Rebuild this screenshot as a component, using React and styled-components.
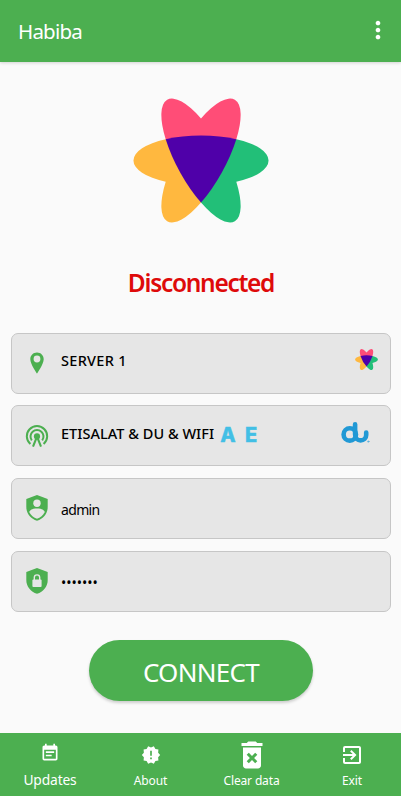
import styled, { createGlobalStyle } from "styled-components";
import {
  MdDeleteForever,
  MdEventNote,
  MdExitToApp,
  MdMoreVert,
  MdNewReleases,
} from "react-icons/md";

const GREEN = "#4caf50";

const GlobalStyle = createGlobalStyle`
  * {
    box-sizing: border-box;
  }
  body {
    margin: 0;
    background: #fafafa;
    font-family: "Noto Sans", "Open Sans", sans-serif;
  }
`;

// three crossed ellipses, centered on 0,0
const StarLogo = ({ width, height }) => (
  <svg width={width} height={height} viewBox="-68 -62.5 136 125" preserveAspectRatio="none">
    <path fill="#ffb83f" d="M-35.3 -21.3A67.7 25 0 0 0 -35.3 21.3A69.5 24 -61.1 0 0 0 42.1L10 0Z" />
    <path fill="#22bf78" d="M35.3 -21.3A67.7 25 0 0 1 35.3 21.3A69.5 24 61.1 0 1 0 42.1L-10 0Z" />
    <path fill="#ff4d77" d="M-35.3 -21.3A69.5 24 61.1 0 1 0 -42.1A69.5 24 -61.1 0 1 35.3 -21.3L0 0Z" />
    <path fill="#4f00a9" d="M-35.3 -21.3A67.7 25 0 0 1 35.3 -21.3A69.5 24 -61.1 0 1 0 42.1A69.5 24 61.1 0 1 -35.3 -21.3Z" />
  </svg>
);

const DuLogo = () => (
  <svg width="30" height="24" viewBox="0 0 30 24" fill="none" stroke="#2199d5" strokeWidth="4.6" strokeLinecap="round">
    <circle cx="8.8" cy="13.4" r="6.2" />
    <path d="M14.1 3.2V13.4C14.1 17.5 16.6 19.4 19.6 19.4C22.8 19.4 25.2 17.3 25.2 14V11.6" />
    <circle cx="27.3" cy="20.6" r="0.7" strokeWidth="0.5" />
  </svg>
);

const PinIcon = () => (
  <svg width="14" height="22" viewBox="0 0 14 22">
    <path
      fill={GREEN}
      fillRule="evenodd"
      d="M7 0.5C3.2 0.5 0.3 3.4 0.3 7.2C0.3 12 7 21.5 7 21.5S13.7 12 13.7 7.2C13.7 3.4 10.8 0.5 7 0.5ZM7 3.6A3.4 3.4 0 1 1 7 10.4A3.4 3.4 0 1 1 7 3.6Z"
    />
  </svg>
);

const AntennaIcon = () => (
  <svg width="24" height="24" viewBox="0 0 24 24" fill="none" stroke={GREEN} strokeWidth="2">
    <path d="M5.4 20A10.2 10.2 0 1 1 18.6 20" />
    <path d="M6.8 16.4A6.5 6.5 0 1 1 17.2 16.4" />
    <path d="M8 22.6L12 12.5L16 22.6" strokeWidth="2.1" />
    <circle cx="12" cy="12.4" r="3.1" fill={GREEN} stroke="none" />
  </svg>
);

const ShieldIcon = ({ children }) => (
  <svg width="24" height="28" viewBox="0 0 24 28">
    <path fill={GREEN} d="M12 1L22.7 5V13C22.7 19.5 18.4 24.8 12 26.8C5.6 24.8 1.3 19.5 1.3 13V5Z" />
    {children}
  </svg>
);

const App = () => {
  return (
    <>
      <GlobalStyle />
      <Screen>
        <Header>
          <Title>Habiba</Title>
          <MdMoreVert size={28} />
        </Header>

        <Main>
          <Hero>
            <StarLogo width={136} height={125} />
          </Hero>
          <Status>Disconnected</Status>

          <Fields>
            <Field>
              <IconSlot><PinIcon /></IconSlot>
              <Label $bold $spacing="0.3px">SERVER 1</Label>
              <Brand $width="23px" $lift="-8px"><StarLogo width={23} height={21} /></Brand>
            </Field>
            <Field>
              <IconSlot><AntennaIcon /></IconSlot>
              <Label $bold $spacing="0.03px">ETISALAT &amp; DU &amp; WIFI</Label>
              <Letters>
                <span>A</span>
                <span>E</span>
              </Letters>
              <Brand $width="37px" $lift="-6px"><DuLogo /></Brand>
            </Field>
            <Field>
              <IconSlot>
                <ShieldIcon>
                  <circle cx="12" cy="9.2" r="3.7" fill="#e6e6e6" />
                  <path fill="#e6e6e6" d="M4.2 18C5 15.5 8.5 14.5 12 14.5S19 15.5 19.8 18C18.2 21.2 15.3 23.6 12 24.8C8.7 23.6 5.8 21.2 4.2 18Z" />
                </ShieldIcon>
              </IconSlot>
              <Label $drop="2px" $size="14px" $spacing="-0.65px">admin</Label>
            </Field>
            <Field>
              <IconSlot>
                <ShieldIcon>
                  <rect x="7.4" y="12.4" width="9.2" height="7.6" rx="1" fill="#e6e6e6" />
                  <path d="M9.3 13V10.6A2.7 2.7 0 0 1 14.7 10.6V13" fill="none" stroke="#e6e6e6" strokeWidth="1.4" />
                </ShieldIcon>
              </IconSlot>
              <Password>•••••••</Password>
            </Field>
          </Fields>

          <ConnectButton>CONNECT</ConnectButton>
        </Main>

        <Footer>
          <NavItem $size="13.8px" $iconTop="1px">
            <MdEventNote size={20} />
            <span>Updates</span>
          </NavItem>
          <NavItem>
            <MdNewReleases size={20} />
            <span>About</span>
          </NavItem>
          <NavItem>
            <MdDeleteForever size={36} />
            <span>Clear data</span>
          </NavItem>
          <NavItem>
            <MdExitToApp size={24} />
            <span>Exit</span>
          </NavItem>
        </Footer>
      </Screen>
    </>
  );
};

export default App;

const Screen = styled.div`
  width: 401px;
  height: 800px;
  display: flex;
  flex-direction: column;
  background: #fafafa;
  border-bottom: 4px solid #fff;
`;
const Header = styled.header`
  height: 61.5px;
  flex: none;
  display: flex;
  align-items: center;
  justify-content: space-between;
  padding: 0 9px 2px 18px;
  background: ${GREEN};
  color: white;
  box-shadow: 0 1px 3px rgba(0, 0, 0, 0.16);
`;
const Title = styled.h1`
  margin: 3px 0 0;
  font-size: 20.5px;
  font-weight: 400;
  line-height: 28px;
  letter-spacing: -0.8px;
`;
const Main = styled.main`
  flex: 1;
  display: flex;
  flex-direction: column;
  align-items: center;
  padding-top: 36.5px;
`;
const Hero = styled.div`
  display: flex;
  padding-left: 1.5px;
`;
const Status = styled.div`
  height: 36px;
  margin: 41px 0 0 1px;
  line-height: 37px;
  font-size: 24.5px;
  font-weight: 600;
  letter-spacing: -1.3px;
  color: #de0a0a;
`;
const Fields = styled.section`
  width: 380px;
  margin: 32.5px 0 0 1px;
  display: grid;
  gap: 11.7px;
`;
const Field = styled.div`
  height: 61px;
  display: flex;
  align-items: center;
  padding-right: 12px;
  border: 1.5px solid #c6c6c6;
  border-radius: 7px;
  background: #e6e6e6;
`;
const IconSlot = styled.div`
  width: 49px;
  display: flex;
  justify-content: center;
`;
const Label = styled.span`
  margin-top: ${({ $drop }) => $drop || "-6px"};
  font-size: ${({ $size }) => $size || "14.5px"};
  font-weight: ${({ $bold }) => ($bold ? 500 : 400)};
  letter-spacing: ${({ $spacing }) => $spacing || "0"};
  white-space: nowrap;
  color: #000;
`;
const Letters = styled.span`
  display: flex;
  gap: 9.5px;
  margin: -2px 0 0 6px;
  font-family: Inter, sans-serif;
  font-size: 20px;
  font-weight: 800;
  line-height: 24px;
  color: #42bfe5;
  -webkit-text-stroke: 0.4px #42bfe5;
`;
const Brand = styled.div`
  display: flex;
  width: ${({ $width }) => $width};
  margin: ${({ $lift }) => $lift} 0 0 auto;
`;
const Password = styled.span`
  margin-top: 3px;
  font-size: 14px;
`;
const ConnectButton = styled.button`
  width: 224px;
  height: 61px;
  margin: 28.5px 0 0 1px;
  padding: 3px 0 0;
  border: none;
  border-radius: 31px;
  background: ${GREEN};
  color: white;
  font: 400 26px "Noto Sans", sans-serif;
  letter-spacing: -0.7px;
  box-shadow: 0 2px 3px rgba(0, 0, 0, 0.18);
`;
const Footer = styled.nav`
  height: 63px;
  flex: none;
  display: grid;
  grid-template-columns: 100px 101px 101px 100px;
  background: ${GREEN};
  color: white;
`;
const NavItem = styled.div`
  display: flex;
  flex-direction: column;
  align-items: center;

  svg {
    height: 38px;
    margin-top: ${({ $iconTop }) => $iconTop || "3px"};
  }
  span {
    margin-top: ${({ $iconTop }) => ($iconTop ? "1px" : "0")};
    font-size: ${({ $size }) => $size || "12px"};
    line-height: 14px;
    letter-spacing: -0.15px;
  }
`;
